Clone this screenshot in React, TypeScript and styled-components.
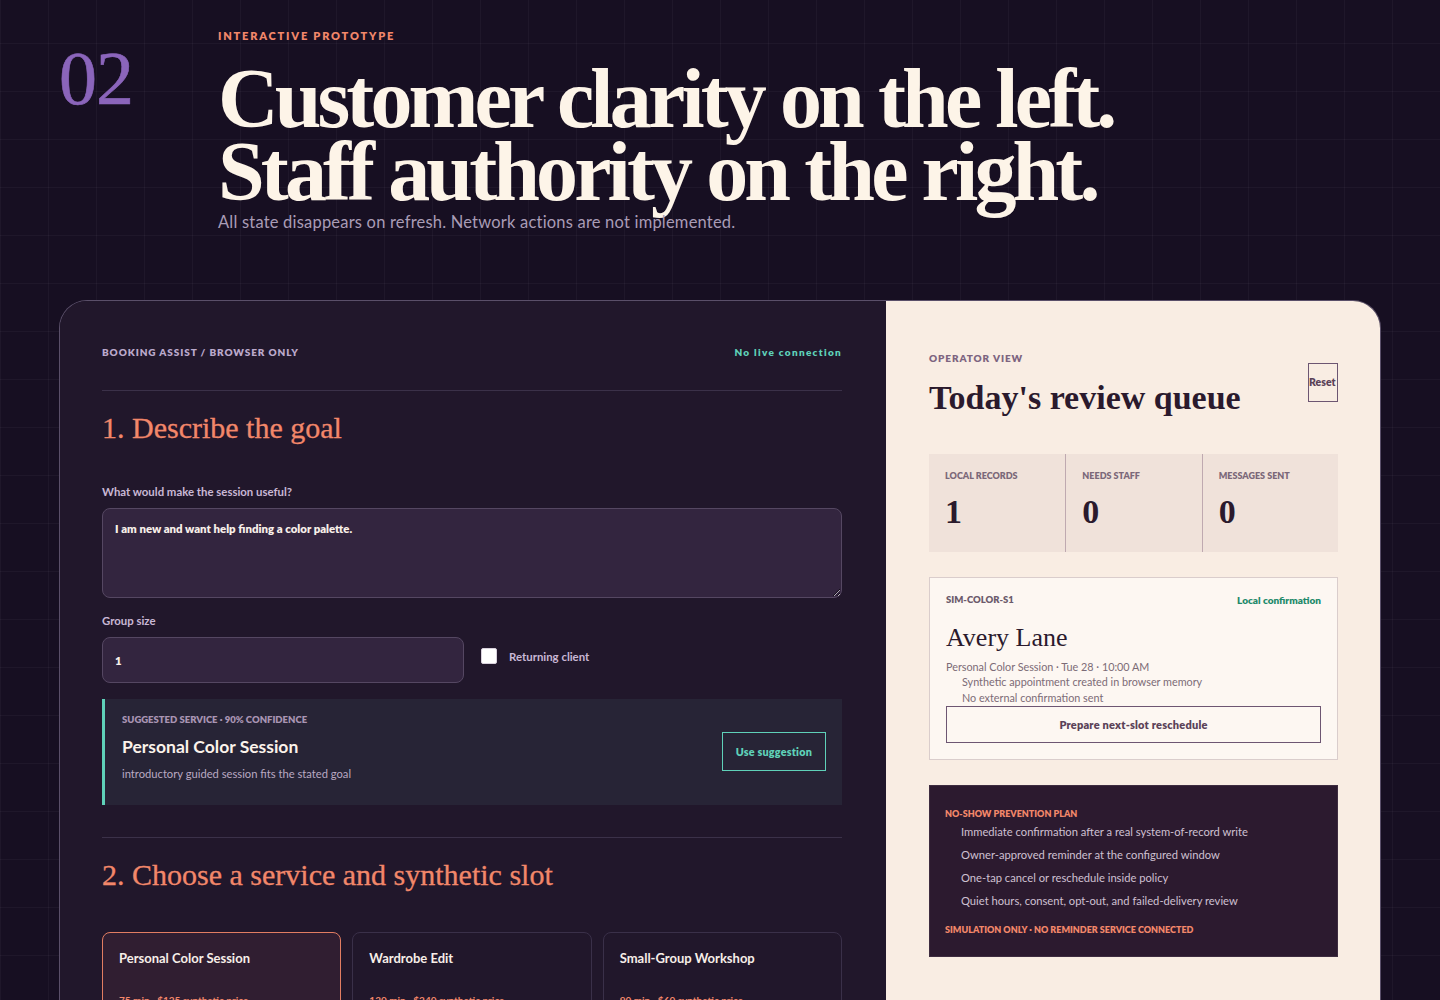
import { useState } from 'react';
import styled, { createGlobalStyle } from 'styled-components';

const GlobalStyle = createGlobalStyle`
  * { box-sizing: border-box; }
  body {
    margin: 0;
    background: #170f22;
    font-family: Lato, "Noto Sans", sans-serif;
    color: #f6ede6;
    overflow: hidden;
  }
`;

const serif = `"Liberation Serif", "DejaVu Serif", serif`;

const Page = styled.div`
  min-height: 1000px;
  background-color: #170f22;
  background-image:
    linear-gradient(rgba(255, 255, 255, 0.035) 1px, transparent 1px),
    linear-gradient(90deg, rgba(255, 255, 255, 0.035) 1px, transparent 1px);
  background-size: 48px 48px;
  background-position: 0 -5px, 0 0;
  padding: 29px 59px 0;
`;

const Hero = styled.header`
  display: grid;
  grid-template-columns: 159px 1fr;
`;

const Index = styled.div`
  font-family: ${serif};
  font-size: 76px;
  line-height: 70px;
  color: #8b65bb;
  margin-top: 14px;
  letter-spacing: -1px;
  -webkit-text-stroke: 0.6px #8b65bb;
`;

const Eyebrow = styled.div`
  font-size: 11px;
  line-height: 14px;
  font-weight: 800;
  letter-spacing: 1.8px;
  color: #f2876a;
  text-transform: uppercase;
`;

const Headline = styled.h1`
  margin: 19px 0 0;
  font-family: ${serif};
  font-weight: 700;
  font-size: 84px;
  line-height: 73px;
  letter-spacing: -3.9px;
  color: #fdf4e8;
`;

const Lede = styled.p`
  margin: 4px 0 0;
  font-size: 16.5px;
  line-height: 20px;
  letter-spacing: 0.2px;
  color: #a99cb6;
`;

const Board = styled.main`
  margin-top: 68px;
  display: grid;
  grid-template-columns: 826px 1fr;
  border: 1px solid #5a4f69;
  border-bottom: none;
  border-radius: 28px 28px 0 0;
  overflow: hidden;
  min-height: 720px;
`;

/* customer side */

const CustomerSide = styled.section`
  background: #21172b;
  padding: 0 44px 0 42px;
`;

const TopBar = styled.div`
  display: flex;
  justify-content: space-between;
  align-items: center;
  padding: 44px 0 31px;
  border-bottom: 1px solid #3b3149;
`;

const Kicker = styled.span<{ $tone?: string }>`
  font-size: 10px;
  line-height: 14px;
  font-weight: 800;
  letter-spacing: 0.9px;
  text-transform: uppercase;
  color: ${(p) => p.$tone || '#bba9cb'};
`;

const LiveTag = styled.span`
  font-size: 10px;
  line-height: 14px;
  font-weight: 800;
  letter-spacing: 1.3px;
  color: #5fd1b9;
`;

const Step = styled.div<{ $last?: boolean }>`
  padding: 19px 0 ${(p) => (p.$last ? '0' : '32px')};
  border-bottom: ${(p) => (p.$last ? 'none' : '1px solid #3b3149')};
`;

const StepTitle = styled.h2`
  margin: 0 0 39px;
  font-family: ${serif};
  font-weight: 400;
  font-size: 30px;
  line-height: 36px;
  color: #f2876a;
  -webkit-text-stroke: 0.3px #f2876a;
`;

const FieldLabel = styled.label`
  display: block;
  font-size: 11.4px;
  line-height: 14px;
  font-weight: 700;
  color: #c9b8d5;
  margin-bottom: 9px;
`;

const GoalInput = styled.textarea`
  display: block;
  width: 100%;
  height: 90px;
  padding: 13px 12px;
  border: 1px solid #554762;
  border-radius: 8px;
  background: #33253f;
  color: #f8efe9;
  font-family: inherit;
  font-size: 11.4px;
  line-height: 14px;
  font-weight: 800;
  resize: vertical;
  outline: none;
  margin-bottom: 16px;
`;

const FieldRow = styled.div`
  display: flex;
  align-items: flex-start;
  gap: 17px;
  margin-bottom: 16px;
`;

const SizeInput = styled.input`
  width: 362px;
  height: 46px;
  padding: 0 12px;
  border: 1px solid #554762;
  border-radius: 8px;
  background: #33253f;
  color: #f8efe9;
  font-family: inherit;
  font-size: 11.4px;
  font-weight: 800;
  outline: none;
`;

const CheckLabel = styled.label`
  display: flex;
  align-items: center;
  gap: 12px;
  margin-top: 11px;
  font-size: 11.4px;
  font-weight: 700;
  color: #c9b8d5;
`;

const Box = styled.input`
  appearance: none;
  margin: 0;
  width: 16px;
  height: 16px;
  border-radius: 2px;
  background: #ffffff;
  border: 1px solid #d8d0dc;
`;

const Suggestion = styled.div`
  display: flex;
  align-items: center;
  justify-content: space-between;
  background: #272436;
  border-left: 3px solid #5fd1b9;
  padding: 15px 16px 23px 17px;
`;

const SuggestionMeta = styled.div`
  font-size: 9.5px;
  line-height: 12px;
  font-weight: 800;
  color: #a994b3;
  text-transform: uppercase;
`;

const SuggestionName = styled.div`
  margin-top: 10px;
  font-size: 17.5px;
  line-height: 22px;
  font-weight: 700;
  color: #fbf2ea;
`;

const SuggestionWhy = styled.div`
  margin-top: 8px;
  font-size: 11.2px;
  line-height: 16px;
  color: #b9a9c2;
`;

const GhostButton = styled.button<{ $tone: string; $ink: string }>`
  background: transparent;
  border: 1px solid ${(p) => p.$tone};
  color: ${(p) => p.$ink};
  font-family: inherit;
  font-weight: 800;
  cursor: pointer;
`;

const UseButton = styled(GhostButton)`
  height: 39px;
  padding: 0 13px;
  margin-top: 7px;
  font-size: 10.8px;
  letter-spacing: 0.2px;
`;

const ServiceGrid = styled.div`
  display: grid;
  grid-template-columns: repeat(3, 1fr);
  gap: 11px;
`;

const ServiceCard = styled.div<{ $active?: boolean }>`
  height: 140px;
  padding: 17px 16px;
  border-radius: 8px;
  border: 1px solid ${(p) => (p.$active ? '#e27d62' : '#3a3049')};
  background: ${(p) => (p.$active ? '#301e31' : '#21172b')};
  cursor: pointer;
`;

const ServiceName = styled.div`
  font-size: 13px;
  line-height: 16px;
  font-weight: 700;
  color: #f7eee8;
`;

const ServicePrice = styled.div`
  margin-top: 27px;
  font-size: 10px;
  line-height: 14px;
  font-weight: 700;
  color: #f2876a;
`;

/* operator side */

const OperatorSide = styled.section`
  background: #f9ede3;
  padding: 45px 42px 0 43px;
  color: #2b1a2d;
`;

const OpHead = styled.div`
  display: flex;
  justify-content: space-between;
  align-items: center;
  margin-bottom: 36px;
`;

const OpTitle = styled.h2`
  margin: 13px 0 0;
  font-family: ${serif};
  font-weight: 700;
  font-size: 34px;
  line-height: 40px;
  color: #2b1a2d;
`;

const ResetButton = styled(GhostButton)`
  width: 30px;
  height: 39px;
  padding: 0;
  font-size: 10.5px;
  white-space: nowrap;
  display: flex;
  align-items: center;
  justify-content: flex-start;
`;

const Stats = styled.div`
  display: grid;
  grid-template-columns: repeat(3, 1fr);
  background: #f0e2da;
  margin-bottom: 25px;
`;

const Stat = styled.div`
  padding: 16px 16px 20px;
  & + & {
    border-left: 1px solid #bfa9b0;
  }
`;

const StatLabel = styled.div`
  font-size: 9px;
  line-height: 12px;
  font-weight: 800;
  color: #7b6879;
  text-transform: uppercase;
`;

const StatValue = styled.div`
  margin-top: 10px;
  font-family: ${serif};
  font-weight: 700;
  font-size: 34px;
  line-height: 40px;
  color: #2b1a2d;
`;

const RecordCard = styled.article`
  background: #fdf7f2;
  border: 1px solid #dacdcc;
  padding: 16px;
  margin-bottom: 25px;
`;

const RecordTop = styled.div`
  display: flex;
  justify-content: space-between;
  font-size: 9.5px;
  line-height: 12px;
  font-weight: 800;
`;

const RecordId = styled.span`
  color: #6c5b6c;
`;

const RecordState = styled.span`
  color: #1f8a6b;
  font-size: 10px;
`;

const Name = styled.h3`
  margin: 16px 0 0;
  font-family: ${serif};
  font-weight: 400;
  font-size: 26px;
  line-height: 32px;
  color: #2b1a2d;
`;

const Meta = styled.div`
  margin-top: 6px;
  font-size: 10.8px;
  line-height: 14px;
  color: #7c6b76;
`;

const Notes = styled.ul<{ $ink: string; $gap: number }>`
  list-style: none;
  margin: 0;
  padding: 0 0 0 16px;
  display: flex;
  flex-direction: column;
  gap: ${(p) => p.$gap}px;
  li {
    font-size: 10.8px;
    line-height: 16px;
    color: ${(p) => p.$ink};
  }
`;

const WideButton = styled(GhostButton)`
  display: block;
  width: 100%;
  height: 37px;
  font-size: 11px;
  letter-spacing: 0.2px;
`;

const PlanBox = styled.aside`
  background: #2c1a2f;
  border: 1px solid #3e2c40;
  padding: 22px 16px 20px 15px;
`;

const PlanHead = styled.div<{ $gap: number }>`
  font-size: 9px;
  line-height: 12px;
  font-weight: 800;
  color: #f2876a;
  text-transform: uppercase;
  margin-top: ${(p) => p.$gap}px;
`;

const PlanList = styled(Notes)`
  margin-top: 4px;
  li {
    font-size: 11.2px;
  }
`;

const services = [
  { name: 'Personal Color Session', price: '75 min · $125 synthetic price' },
  { name: 'Wardrobe Edit', price: '120 min · $240 synthetic price' },
  { name: 'Small-Group Workshop', price: '90 min · $60 synthetic price' },
];

const stats = [
  { label: 'Local records', value: 1 },
  { label: 'Needs staff', value: 0 },
  { label: 'Messages sent', value: 0 },
];

const plan = [
  'Immediate confirmation after a real system-of-record write',
  'Owner-approved reminder at the configured window',
  'One-tap cancel or reschedule inside policy',
  'Quiet hours, consent, opt-out, and failed-delivery review',
];

export default function App() {
  const [goal, setGoal] = useState('I am new and want help finding a color palette.');
  const [size, setSize] = useState('1');
  const [returning, setReturning] = useState(false);
  const [picked, setPicked] = useState(0);

  return (
    <>
      <GlobalStyle />
      <Page>
        <Hero>
          <Index>02</Index>
          <div>
            <Eyebrow>Interactive prototype</Eyebrow>
            <Headline>
              Customer clarity on the left.
              <br />
              Staff authority on the right.
            </Headline>
            <Lede>All state disappears on refresh. Network actions are not implemented.</Lede>
          </div>
        </Hero>

        <Board>
          <CustomerSide>
            <TopBar>
              <Kicker>Booking assist / browser only</Kicker>
              <LiveTag>No live connection</LiveTag>
            </TopBar>

            <Step>
              <StepTitle>1. Describe the goal</StepTitle>
              <FieldLabel htmlFor="goal">What would make the session useful?</FieldLabel>
              <GoalInput id="goal" value={goal} onChange={(e) => setGoal(e.target.value)} />
              <FieldLabel htmlFor="size">Group size</FieldLabel>
              <FieldRow>
                <SizeInput id="size" value={size} onChange={(e) => setSize(e.target.value)} />
                <CheckLabel>
                  <Box type="checkbox" checked={returning} onChange={() => setReturning(!returning)} />
                  Returning client
                </CheckLabel>
              </FieldRow>
              <Suggestion>
                <div>
                  <SuggestionMeta>Suggested service · 90% confidence</SuggestionMeta>
                  <SuggestionName>Personal Color Session</SuggestionName>
                  <SuggestionWhy>introductory guided session fits the stated goal</SuggestionWhy>
                </div>
                <UseButton $tone="#5fd1b9" $ink="#5fd1b9" onClick={() => setPicked(0)}>
                  Use suggestion
                </UseButton>
              </Suggestion>
            </Step>

            <Step $last>
              <StepTitle>2. Choose a service and synthetic slot</StepTitle>
              <ServiceGrid>
                {services.map((s, i) => (
                  <ServiceCard key={s.name} $active={picked === i} onClick={() => setPicked(i)}>
                    <ServiceName>{s.name}</ServiceName>
                    <ServicePrice>{s.price}</ServicePrice>
                  </ServiceCard>
                ))}
              </ServiceGrid>
            </Step>
          </CustomerSide>

          <OperatorSide>
            <OpHead>
              <div>
                <Kicker $tone="#7d6480">Operator view</Kicker>
                <OpTitle>Today's review queue</OpTitle>
              </div>
              <ResetButton $tone="#6d5672" $ink="#5b4258">Reset</ResetButton>
            </OpHead>

            <Stats>
              {stats.map((s) => (
                <Stat key={s.label}>
                  <StatLabel>{s.label}</StatLabel>
                  <StatValue>{s.value}</StatValue>
                </Stat>
              ))}
            </Stats>

            <RecordCard>
              <RecordTop>
                <RecordId>SIM-COLOR-S1</RecordId>
                <RecordState>Local confirmation</RecordState>
              </RecordTop>
              <Name>Avery Lane</Name>
              <Meta>Personal Color Session · Tue 28 · 10:00 AM</Meta>
              <Notes $ink="#7c6b76" $gap={0}>
                <li>Synthetic appointment created in browser memory</li>
                <li>No external confirmation sent</li>
              </Notes>
              <WideButton $tone="#6d5672" $ink="#5b4258">Prepare next-slot reschedule</WideButton>
            </RecordCard>

            <PlanBox>
              <PlanHead $gap={0}>No-show prevention plan</PlanHead>
              <PlanList $ink="#cfc0d2" $gap={7}>
                {plan.map((p) => (
                  <li key={p}>{p}</li>
                ))}
              </PlanList>
              <PlanHead $gap={15}>Simulation only · No reminder service connected</PlanHead>
            </PlanBox>
          </OperatorSide>
        </Board>
      </Page>
    </>
  );
}
